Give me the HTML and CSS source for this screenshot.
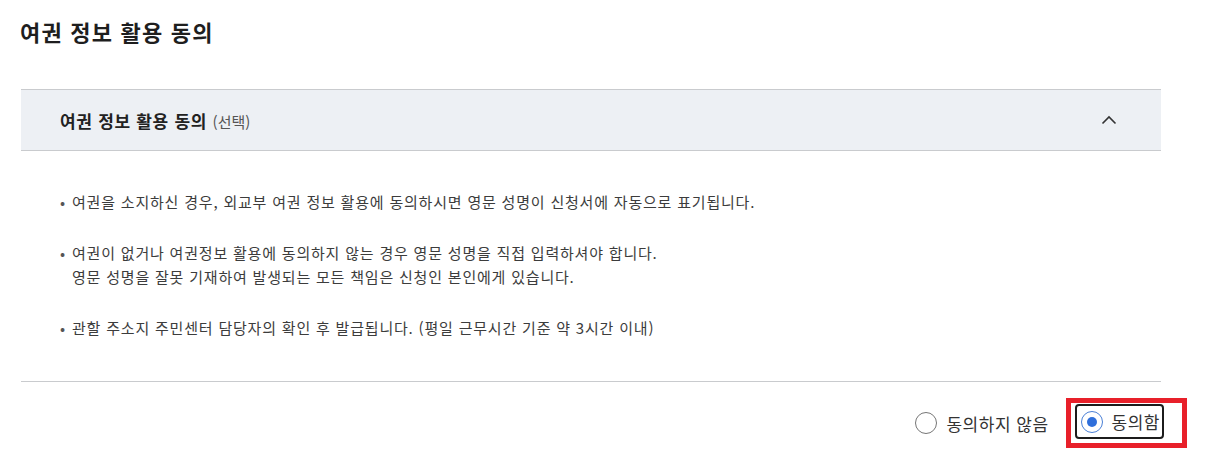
FILE: index.html
```html
<!DOCTYPE html>
<html lang="ko">
  <head>
    <meta charset="UTF-8" />
    <meta name="viewport" content="width=device-width, initial-scale=1.0" />
    <title>여권 정보 활용 동의</title>
    <link rel="stylesheet" href="styles.css">
  </head>
  <body>
    <div class="page">
      <h1 class="page-title">여권 정보 활용 동의</h1>

      <div class="accordion">
        <div class="accordion-head">
          <span class="accordion-title">여권 정보 활용 동의 <span class="optional">(선택)</span></span>
          <svg class="chevron" width="16" height="10" viewBox="0 0 16 10">
            <path d="M1.5 8.5 L8 2 L14.5 8.5" fill="none" stroke="#333" stroke-width="1.6" />
          </svg>
        </div>
        <div class="accordion-body">
          <p class="note">여권을 소지하신 경우, 외교부 여권 정보 활용에 동의하시면 영문 성명이 신청서에 자동으로 표기됩니다.</p>
          <p class="note">여권이 없거나 여권정보 활용에 동의하지 않는 경우 영문 성명을 직접 입력하셔야 합니다.<br />영문 성명을 잘못 기재하여 발생되는 모든 책임은 신청인 본인에게 있습니다.</p>
          <p class="note">관할 주소지 주민센터 담당자의 확인 후 발급됩니다. (평일 근무시간 기준 약 3시간 이내)</p>
        </div>
      </div>

      <div class="choices">
        <label class="choice">
          <span class="radio"></span>
          동의하지 않음
        </label>
        <div class="highlight">
          <label class="choice selected">
            <span class="radio checked"></span>
            동의함
          </label>
        </div>
      </div>
    </div>
  </body>
</html>
```

FILE: styles.css
```css
body {
  margin: 0;
  background-color: #fff;
  font-family: "Noto Sans CJK KR", "Noto Sans", sans-serif;
  color: #222;
}
.page {
  width: 1140px;
  margin-left: 21px;
}
.page-title {
  margin: 0 0 43px -1px;
  padding-top: 16px;
  font-size: 22px;
  line-height: 30px;
  font-weight: 700;
  letter-spacing: 1.2px;
  color: #1e1e1e;
}
.accordion-head {
  height: 60px;
  display: flex;
  align-items: center;
  justify-content: space-between;
  padding: 0 44px 0 39px;
  background-color: #edf0f4;
  border-top: 1px solid #c9cbce;
  border-bottom: 1px solid #c9cbce;
}
.accordion-title {
  font-size: 17px;
  font-weight: 700;
  letter-spacing: 0.7px;
  color: #222;
}
.optional {
  font-size: 15px;
  font-weight: 400;
  letter-spacing: 0;
  color: #555;
}
.accordion-body {
  padding: 39px 0 41px 39px;
  border-bottom: 1px solid #c9cbce;
}
.note {
  position: relative;
  margin: 0 0 27px;
  padding-left: 12px;
  font-size: 15px;
  line-height: 24px;
  letter-spacing: 0.8px;
  color: #3c3c3c;
}
.note:last-child {
  margin-bottom: 0;
}
.note::before {
  content: "•";
  position: absolute;
  left: 0;
  top: 0;
  color: #555;
}
.choices {
  display: flex;
  justify-content: flex-end;
  align-items: center;
  gap: 13px;
  padding-top: 16px;
  margin-right: -26px;
}
.choice {
  display: flex;
  align-items: center;
  gap: 9px;
  height: 31px;
  padding: 0 2px 0 4px;
  font-size: 17px;
  letter-spacing: 0.5px;
  color: #333;
  border: 2px solid transparent;
  border-radius: 4px;
}
.choice.selected {
  border-color: #1c1c1c;
}
.radio {
  width: 22px;
  height: 22px;
  border: 1px solid #767676;
  border-radius: 50%;
  box-sizing: border-box;
  position: relative;
  background: #fff;
}
.radio.checked {
  border-color: #4a7fd6;
}
.radio.checked::after {
  content: "";
  position: absolute;
  left: 5px;
  top: 5px;
  width: 10px;
  height: 10px;
  border-radius: 50%;
  background: #2f6fdb;
}
.highlight {
  padding: 1px 18px 4px 4px;
  border: 5px solid #e8202a;
}
```
